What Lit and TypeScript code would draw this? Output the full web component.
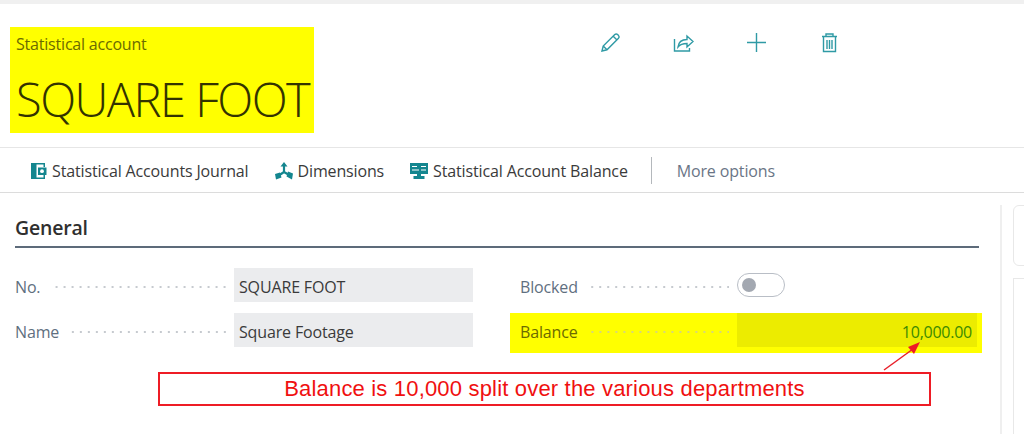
import { LitElement, html, css } from "lit";
import { customElement } from "lit/decorators.js";

@customElement("app-root")
export class AppRoot extends LitElement {
  static styles = css`
    :host { display: block; position: relative; width: 1024px; height: 434px; overflow: hidden; background: #fff; font-family: "Open Sans", "Noto Sans", sans-serif; color: #333; }
    .strip { height: 4px; background: #f0f0f0; }
    .head { height: 143px; display: flex; align-items: flex-start; box-sizing: border-box; padding: 23px 0 0 10px; }
    .title { width: 304px; height: 106px; background: #ffff00; box-sizing: border-box; padding: 7px 0 0 6px; overflow: hidden; white-space: nowrap; }
    .sub { font-size: 16px; line-height: 20px; color: #6b6b00; letter-spacing: -0.2px; }
    .big { font-family: "Open Sans", sans-serif; font-weight: 300; font-size: 47px; line-height: 60px; margin-top: 15px; color: #333300; letter-spacing: -1.5px; }
    .actions { display: flex; margin-left: 286px; gap: 52px; padding-top: 5px; }
    .actions svg { width: 21px; height: 21px; display: block; fill: none; stroke: #2f9aa5; stroke-width: 1.4; }
    .bar { height: 46px; box-sizing: border-box; border-top: 1.5px solid #e6e6e6; border-bottom: 1.5px solid #dcdcdc; display: flex; align-items: center; padding: 1px 0 0 30px; font-size: 16px; letter-spacing: -0.14px; color: #3a3a3a; white-space: nowrap; }
    .item { display: flex; align-items: center; gap: 5px; margin-right: 26px; }
    .item svg { width: 18px; height: 18px; display: block; }
    .item svg.n { margin-right: -1px; }
    .sep { width: 1px; height: 27px; background: #b4b8bc; margin-right: 25px; margin-left: -3px; }
    .more { color: #6a7586; }
    .content { display: flex; }
    .main { width: 964px; margin-left: 15px; padding-top: 22px; }
    h2 { margin: 0; font-size: 19.5px; line-height: 26px; font-weight: 600; color: #2f2f2f; letter-spacing: -0.2px; height: 31px; border-bottom: 2px solid #5d6b7a; box-sizing: content-box; }
    .grid { display: grid; grid-template-columns: 458px 457px; column-gap: 47px; row-gap: 11px; margin-top: 20px; }
    .field { display: flex; align-items: center; height: 34px; font-size: 16px; letter-spacing: -0.15px; }
    .lab { color: #5f6f80; white-space: nowrap; padding-top: 4px; }
    .dots { flex: 1; height: 2px; margin: 4px 8px 0 10px; background: radial-gradient(circle at 7px 1px, #c6cacf 0.9px, transparent 1.1px) right center / 8px 2px repeat-x; }
    .val { width: 239px; height: 100%; background: #ebecee; box-sizing: border-box; padding-left: 5px; line-height: 38px; color: #3a3a3a; }
    .toggle { width: 240px; display: flex; align-items: center; }
    .track { width: 48px; height: 24px; box-sizing: border-box; border: 1px solid #b9bec6; border-radius: 12px; display: flex; align-items: center; padding-left: 4px; }
    .knob { width: 14px; height: 14px; border-radius: 50%; background: #a3a8b1; }
    .hl { position: absolute; left: 510px; top: 313px; width: 472px; height: 40px; background: #ffff00; }
    .field.bal { position: absolute; left: 520px; top: 313px; width: 457px; height: 34px; }
    .bal .lab { color: #6b6b00; }
    .bal .dots { background-image: radial-gradient(circle at 7px 1px, #d6d67a 0.9px, transparent 1.1px); }
    .bal .val { width: 240px; background: #ecec00; text-align: right; padding: 0 5px 0 0; color: #3c8a00; letter-spacing: -0.25px; }
    .side { position: absolute; left: 1000px; top: 205px; bottom: 0; width: 24px; border-left: 2px solid #efefef; }
    .card { position: absolute; left: 11px; top: 0; width: 40px; height: 61px; border: 1px solid #e8e8e8; border-radius: 6px; box-sizing: border-box; }
    .card2 { position: absolute; left: 11px; top: 73px; width: 40px; height: 200px; border: 1px solid #e8e8e8; box-sizing: border-box; }
    .callout { position: absolute; left: 158px; top: 372px; width: 773px; height: 34px; box-sizing: border-box; border: 2px solid #ee1c25; font-family: "Liberation Sans", Arial, sans-serif; font-size: 22px; letter-spacing: 0.18px; color: #f01010; display: flex; align-items: center; justify-content: center; padding-bottom: 1px; white-space: nowrap; }
    .arrow { position: absolute; left: 879px; top: 334px; width: 45px; height: 40px; }
  `;

  render() {
    return html`
      <div class="strip"></div>
      <div class="head">
        <div class="title">
          <div class="sub">Statistical account</div>
          <div class="big">SQUARE FOOT</div>
        </div>
        <div class="actions">
          <svg viewBox="0 0 21 21"><path d="M2 19l1.200-5L14.800 2.600a2 2 0 0 1 2.800 0l.9.9a2 2 0 0 1 0 2.800L7 17.800z M3.200 14l3.800 3.800 M13.200 4.200l3.800 3.800"/></svg>
          <svg viewBox="0 0 21 21"><path d="M1.500 7v12h15v-3 M5 15c.5-4.500 3.500-7.500 9-7.500V4l6 5.500-6 5.500v-3.500c-4 0-7 1-9 3.500z"/></svg>
          <svg viewBox="0 0 21 21"><path d="M10.500 1v19 M1 10.500h19"/></svg>
          <svg viewBox="0 0 21 21"><path d="M3 4.500h15 M7 4.500V2h7v2.500 M4.500 4.500V19.500h12V4.500 M8 8v9 M10.500 8v9 M13 8v9"/></svg>
        </div>
      </div>
      <div class="bar">
        <div class="item">
          <svg class="n" viewBox="0 0 18 18"><path fill="#14868f" d="M1 1h14v4h-1.500V2.500H6.500v13h7V13H15v4H1z"/><path fill="#14868f" d="M8 5.500h8.500v7.500H8z"/><circle cx="12" cy="9.200" r="1.900" fill="#fff"/></svg>
          Statistical Accounts Journal
        </div>
        <div class="item">
          <svg viewBox="0 0 18 18" fill="none" stroke="#14868f" stroke-width="2.200"><path d="M9 3v7 M9 10l-6 4 M9 10l6 3.500"/><path fill="#14868f" stroke="none" d="M9 0l3.500 4.500h-7z M0 12l5-1.500 1.500 5L1 17.500z M18 11.500l-5-2-1.500 5 5.500 3z"/></svg>
          Dimensions
        </div>
        <div class="item">
          <svg viewBox="0 0 18 18"><path fill="#14868f" d="M0 1h18v11H0z M7 12h4v2h3.500v3h-11v-3H7z"/><path stroke="#fff" stroke-width="1.200" fill="none" d="M2 4.500h5 M2 8h7 M11 4.500h5 M11 8h5"/></svg>
          Statistical Account Balance
        </div>
        <div class="sep"></div>
        <div class="more">More options</div>
      </div>
      <div class="content">
        <div class="main">
          <h2>General</h2>
          <div class="grid">
            <div class="field"><span class="lab">No.</span><span class="dots"></span><div class="val">SQUARE FOOT</div></div>
            <div class="field"><span class="lab">Blocked</span><span class="dots"></span><div class="toggle"><div class="track"><div class="knob"></div></div></div></div>
            <div class="field"><span class="lab">Name</span><span class="dots"></span><div class="val">Square Footage</div></div>
            <div></div>
          </div>
        </div>
      </div>
      <div class="hl"></div>
      <div class="field bal"><span class="lab">Balance</span><span class="dots"></span><div class="val">10,000.00</div></div>
      <div class="side"><div class="card"></div><div class="card2"></div></div>
      <div class="callout">Balance is 10,000 split over the various departments</div>
      <svg class="arrow" viewBox="0 0 45 40"><path d="M5 36L34 15" stroke="#e8202a" stroke-width="1.500" fill="none"/><path d="M41 8L29 13l6 7z" fill="#ee1c25"/></svg>
    `;
  }
}
